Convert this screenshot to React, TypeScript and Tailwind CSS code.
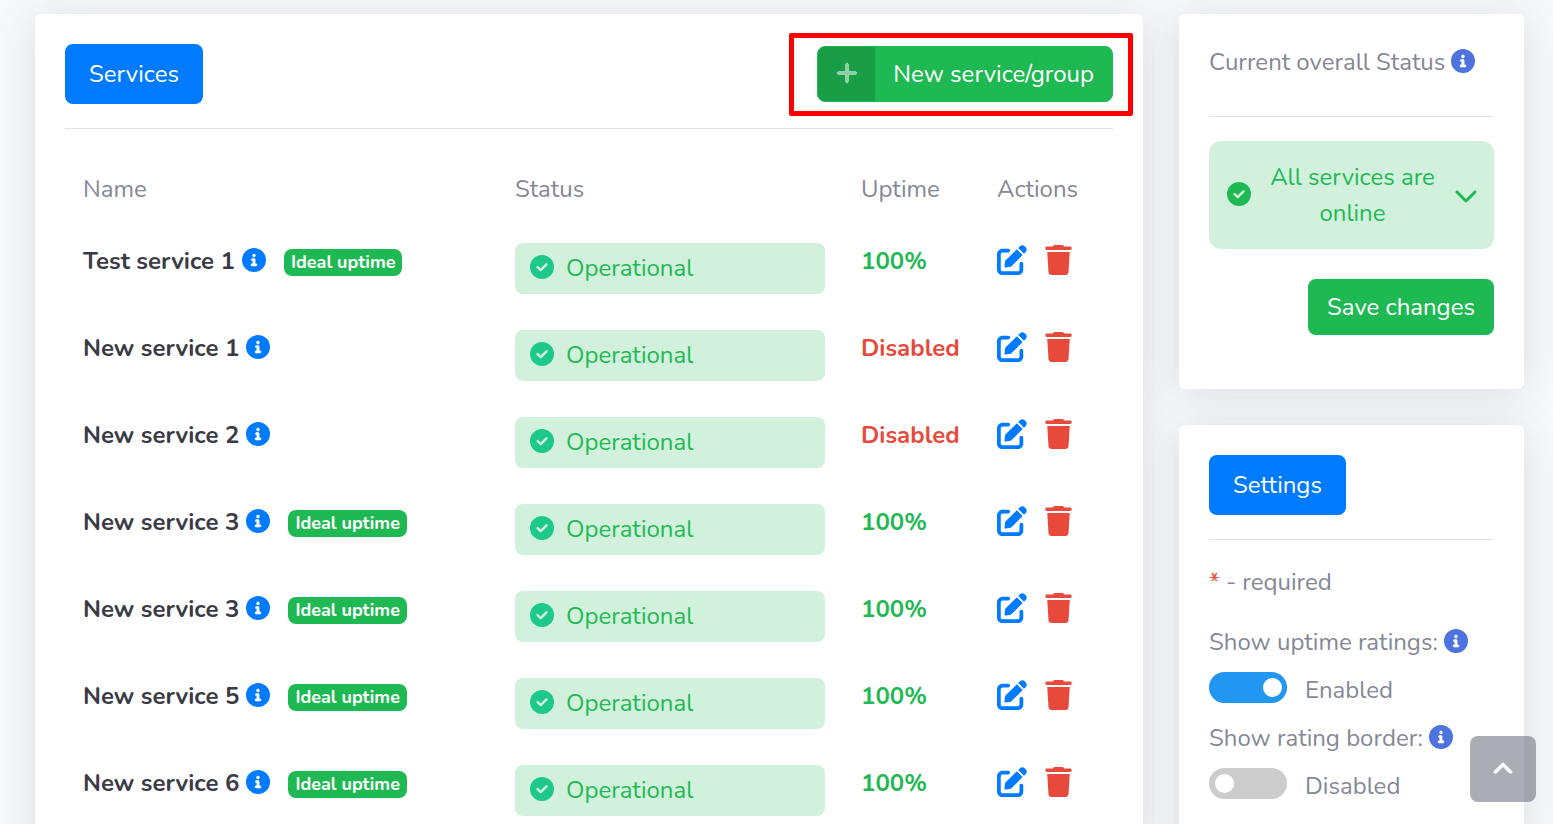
import { useState } from "react";
import clsx from "clsx";
import { FaAngleUp, FaChevronDown, FaPlus } from "react-icons/fa6";

interface Service {
  id: number;
  name: string;
  uptime: string | null;
}

const SERVICES: Service[] = [
  { id: 1, name: "Test service 1", uptime: "100%" },
  { id: 2, name: "New service 1", uptime: null },
  { id: 3, name: "New service 2", uptime: null },
  { id: 4, name: "New service 3", uptime: "100%" },
  { id: 5, name: "New service 3", uptime: "100%" },
  { id: 6, name: "New service 5", uptime: "100%" },
  { id: 7, name: "New service 6", uptime: "100%" },
];

const CARD = "rounded-md bg-white p-[30px] shadow-[0_4px_42px_rgba(58,59,69,0.15)]";

function InfoIcon({ className }: { className?: string }) {
  return (
    <svg viewBox="0 0 512 512" className={clsx("mb-0.5 size-6 shrink-0", className)} aria-hidden="true">
      <circle cx="256" cy="256" r="256" fill="currentColor" />
      <path
        className="fill-white stroke-white"
        strokeWidth="12"
        d="M256 128c17.67 0 32 14.33 32 32s-14.33 32-32 32-32-14.33-32-32 14.33-32 32-32zM296 384h-80c-13.25 0-24-10.75-24-24s10.75-24 24-24h16v-64h-8c-13.25 0-24-10.75-24-24s10.75-24 24-24h32c13.25 0 24 10.75 24 24v88h16c13.25 0 24 10.75 24 24s-10.75 24-24 24z"
      />
    </svg>
  );
}

function CheckIcon({ className }: { className?: string }) {
  return (
    <svg viewBox="0 0 24 24" className={clsx("mb-0.5 size-6 shrink-0", className)} aria-hidden="true">
      <circle cx="12" cy="12" r="12" fill="currentColor" />
      <path
        className="fill-none stroke-[#d2f1dd]"
        strokeWidth="2.5"
        strokeLinecap="round"
        strokeLinejoin="round"
        d="M7.6 12.2l3.1 3 5.8-5.8"
      />
    </svg>
  );
}

function EditIcon() {
  return (
    <svg viewBox="0 0 512 512" className="size-[30px]" fill="currentColor" aria-hidden="true">
      <path d="M490.3 40.4C512.2 62.27 512.2 97.73 490.3 119.6L460.3 149.7L362.3 51.72L392.4 21.66C414.3-.2135 449.7-.2135 471.6 21.66L490.3 40.4zM148 262L339.7 74.34L437.7 172.3L250 360C244 366 238 368 230 370L146 384C134 386 126 378 128 366L136 286C138 276 141 269 148 262zM192 63.1C209.7 63.1 224 78.33 224 95.1C224 113.7 209.7 127.1 192 127.1H96C78.33 127.1 64 142.3 64 159.1V416C64 433.7 78.33 448 96 448H352C369.7 448 384 433.7 384 416V319.1C384 302.3 398.3 287.1 416 287.1C433.7 287.1 448 302.3 448 319.1V416C448 469 405 512 352 512H96C42.98 512 0 469 0 416V159.1C0 106.1 42.98 63.1 96 63.1H192z" />
    </svg>
  );
}

function TrashIcon() {
  return (
    <svg viewBox="0 0 448 512" className="h-[30px] w-[27px]" fill="currentColor" aria-hidden="true">
      <path d="M53.2 467c1.6 24.8 23 45 47.9 45h245.8c24.9 0 46.3-20.2 47.9-45L416 118H32L53.2 467zM424 24H320l-11.6-15.2C304 3 300 0 294.1 0H153.9c-6 0-10 3-14.3 8.8L128 24H24C10 24 0 34 0 48v12c0 13 10 24 24 24h400c14 0 24-11 24-24V48c0-14-10-24-24-24z" />
    </svg>
  );
}

function ServiceRow({ service }: { service: Service }) {
  return (
    <tr className="h-[87px] align-top">
      <td className="px-[18px] pt-[18px] font-bold text-[#3a3b45]">
        <div className="flex items-center">
          {service.name}
          <InfoIcon className="ml-[7px] text-[#007bff]" />
          {service.uptime && (
            <span className="mt-0.5 ml-[18px] rounded-lg bg-[#1fb954] px-[7px] text-lg leading-[27px] text-white">
              Ideal uptime
            </span>
          )}
        </div>
      </td>
      <td className="px-[18px] pt-[18px]">
        <div className="flex h-[51px] items-center gap-3 rounded-lg bg-[#d2f1dd] px-[15px] pb-0.5 text-[#1fb954]">
          <CheckIcon className="text-[#1cc88a]" />
          Operational
        </div>
      </td>
      <td
        className={clsx(
          "px-[18px] pt-[18px] font-bold",
          service.uptime ? "text-[#1fb954]" : "text-[#e74a3b]"
        )}
      >
        {service.uptime ?? "Disabled"}
      </td>
      <td className="px-[18px] pt-[20px]">
        <div className="flex gap-[18px]">
          <button type="button" aria-label="Edit" className="text-[#007bff]">
            <EditIcon />
          </button>
          <button type="button" aria-label="Delete" className="text-[#e74a3b]">
            <TrashIcon />
          </button>
        </div>
      </td>
    </tr>
  );
}

interface ToggleProps {
  id: string;
  label: string;
  initial: boolean;
}

function Toggle({ id, label, initial }: ToggleProps) {
  const [enabled, setEnabled] = useState(initial);

  return (
    <div className="h-24">
      <label htmlFor={id} className="flex items-center gap-[6px]">
        {label}
        <InfoIcon className="text-[#4e73df]" />
      </label>
      <div className="mt-3 flex gap-[18px]">
        <input
          id={id}
          type="checkbox"
          checked={enabled}
          onChange={(e) => setEnabled(e.target.checked)}
          className="flex h-[31px] w-[78px] shrink-0 appearance-none items-center rounded-full bg-[#ccc] pr-[5px] pl-[6px] before:size-[19px] before:rounded-full before:bg-white checked:justify-end checked:bg-[#2196f3]"
        />
        <span>{enabled ? "Enabled" : "Disabled"}</span>
      </div>
    </div>
  );
}

export default function App() {
  return (
    <div className="h-screen overflow-hidden bg-[#f8f9fc] font-[Nunito,Lato,sans-serif] text-2xl leading-9 text-[#858796]">
      <div className="flex gap-9 pt-[14px] pr-[29px] pl-[35px]">
        <main className={clsx(CARD, "min-w-0 flex-1")}>
          <div className="flex items-center justify-between">
            <button type="button" className="h-[60px] rounded-lg bg-[#007bff] px-6 text-white">
              Services
            </button>
            <div className="-mt-[11px] -mr-5 -mb-3 rounded-xs border-[5px] border-[#ff0000] pt-2 pr-[15px] pb-[9px] pl-[23px]">
              <button
                type="button"
                className="flex h-14 items-stretch overflow-hidden rounded-lg border border-[#1fb954] bg-[#1fb954] text-white"
              >
                <span className="flex w-[57px] items-center justify-center bg-black/15 pb-0.5 text-white/50">
                  <FaPlus className="size-6 stroke-current stroke-[16]" />
                </span>
                <span className="px-[18px] leading-[54px]">New service/group</span>
              </button>
            </div>
          </div>
          <hr className="mt-6 border-[#e3e3e6]" />

          <table className="mt-6 w-full table-fixed text-left">
            <colgroup>
              <col className="w-[432px]" />
              <col className="w-[346px]" />
              <col className="w-[136px]" />
              <col />
            </colgroup>
            <thead>
              <tr className="h-[72px]">
                <th className="px-[18px] font-normal">Name</th>
                <th className="px-[18px] font-normal">Status</th>
                <th className="px-[18px] font-normal">Uptime</th>
                <th className="px-[18px] font-normal">Actions</th>
              </tr>
            </thead>
            <tbody>
              {SERVICES.map((service) => (
                <ServiceRow key={service.id} service={service} />
              ))}
            </tbody>
          </table>
        </main>

        <aside className="flex w-[345px] shrink-0 flex-col gap-9">
          <section className={CARD}>
            <h2 className="flex items-center gap-[6px]">
              Current overall Status
              <InfoIcon className="text-[#4e73df]" />
            </h2>
            <hr className="mt-9 border-[#e3e3e6]" />
            <button
              type="button"
              className="mt-6 flex w-full items-center justify-between rounded-xl bg-[#d2f1dd] py-[18px] pr-4 pl-[18px] text-[#1fb954]"
            >
              <CheckIcon />
              <span className="px-4 text-center">All services are online</span>
              <FaChevronDown className="size-6 shrink-0" />
            </button>
            <div className="mt-[30px] mb-6 flex justify-end">
              <button type="button" className="h-14 rounded-lg bg-[#1fb954] px-[19px] text-white">
                Save changes
              </button>
            </div>
          </section>

          <section className={CARD}>
            <button type="button" className="h-[60px] rounded-lg bg-[#007bff] px-6 text-white">
              Settings
            </button>
            <hr className="mt-6 mb-6 border-[#e3e3e6]" />
            <p className="mb-6">
              <span className="text-[#e74a3b]">*</span> - required
            </p>
            <Toggle id="uptime-ratings" label="Show uptime ratings:" initial={true} />
            <Toggle id="rating-border" label="Show rating border:" initial={false} />
          </section>
        </aside>
      </div>

      <a
        href="#top"
        aria-label="Scroll to top"
        className="fixed right-[17px] bottom-[22px] flex size-[66px] items-center justify-center rounded-lg bg-[#5a5c69]/50 text-white"
      >
        <FaAngleUp className="size-6 stroke-current stroke-[16]" />
      </a>
    </div>
  );
}
